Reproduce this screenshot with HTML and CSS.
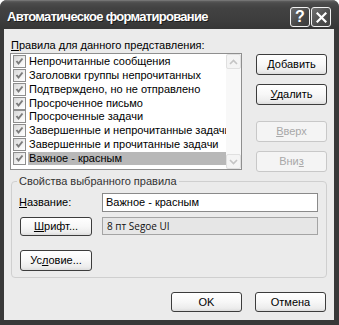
FILE: index.html
```html
<!DOCTYPE html>
<html lang="ru">
<head>
<meta charset="utf-8">
<title>Автоматическое форматирование</title>
<link rel="stylesheet" href="styles.css">
</head>
<body>
<div class="window">
  <div class="titlebar">
    <span class="title">Автоматическое форматирование</span>
    <div class="caption-buttons">
      <span class="cap-btn help">?</span>
      <span class="cap-btn close"><svg width="11" height="11" viewBox="0 0 11 11"><path d="M1.5 1.5 L9.5 9.5 M9.5 1.5 L1.5 9.5" stroke="#fff" stroke-width="2.2" stroke-linecap="square" fill="none"/></svg></span>
    </div>
  </div>
  <div class="client">
    <div class="rules-label"><u>П</u>равила для данного представления:</div>
    <div class="rules-row">
      <div class="listbox">
        <ul class="items">
          <li><span class="cb"><svg width="11" height="11" viewBox="0 0 11 11"><path d="M2.5 5 L4.5 7.5 L8.5 2.5" stroke="#7c7c7c" stroke-width="2" fill="none"/></svg></span><span class="item-text">Непрочитанные сообщения</span></li>
          <li><span class="cb"><svg width="11" height="11" viewBox="0 0 11 11"><path d="M2.5 5 L4.5 7.5 L8.5 2.5" stroke="#7c7c7c" stroke-width="2" fill="none"/></svg></span><span class="item-text">Заголовки группы непрочитанных</span></li>
          <li><span class="cb"><svg width="11" height="11" viewBox="0 0 11 11"><path d="M2.5 5 L4.5 7.5 L8.5 2.5" stroke="#7c7c7c" stroke-width="2" fill="none"/></svg></span><span class="item-text">Подтверждено, но не отправлено</span></li>
          <li><span class="cb"><svg width="11" height="11" viewBox="0 0 11 11"><path d="M2.5 5 L4.5 7.5 L8.5 2.5" stroke="#7c7c7c" stroke-width="2" fill="none"/></svg></span><span class="item-text">Просроченное письмо</span></li>
          <li><span class="cb"><svg width="11" height="11" viewBox="0 0 11 11"><path d="M2.5 5 L4.5 7.5 L8.5 2.5" stroke="#7c7c7c" stroke-width="2" fill="none"/></svg></span><span class="item-text">Просроченные задачи</span></li>
          <li><span class="cb"><svg width="11" height="11" viewBox="0 0 11 11"><path d="M2.5 5 L4.5 7.5 L8.5 2.5" stroke="#7c7c7c" stroke-width="2" fill="none"/></svg></span><span class="item-text">Завершенные и непрочитанные задачи</span></li>
          <li><span class="cb"><svg width="11" height="11" viewBox="0 0 11 11"><path d="M2.5 5 L4.5 7.5 L8.5 2.5" stroke="#7c7c7c" stroke-width="2" fill="none"/></svg></span><span class="item-text">Завершенные и прочитанные задачи</span></li>
          <li class="selected"><span class="cb"><svg width="11" height="11" viewBox="0 0 11 11"><path d="M2.5 5 L4.5 7.5 L8.5 2.5" stroke="#7c7c7c" stroke-width="2" fill="none"/></svg></span><span class="item-text">Важное - красным</span></li>
        </ul>
        <div class="scrollbar">
          <span class="sb-btn"><svg width="9" height="6" viewBox="0 0 9 6"><path d="M1 5 L4.5 1.5 L8 5" stroke="#c4c4c4" stroke-width="1.6" fill="none"/></svg></span>
          <span class="sb-track"></span>
          <span class="sb-btn"><svg width="9" height="6" viewBox="0 0 9 6"><path d="M1 1 L4.5 4.5 L8 1" stroke="#c4c4c4" stroke-width="1.6" fill="none"/></svg></span>
        </div>
      </div>
      <div class="side-buttons">
        <button class="btn btn-add"><u>Д</u>обавить</button>
        <button class="btn btn-del"><u>У</u>далить</button>
        <button class="btn btn-up" disabled><u>В</u>верх</button>
        <button class="btn btn-down" disabled>Вни<u>з</u></button>
      </div>
    </div>
    <fieldset class="props">
      <legend>Свойства выбранного правила</legend>
      <div class="props-grid">
        <label class="name-label"><u>Н</u>азвание:</label>
        <div class="input">Важное - красным</div>
        <button class="btn btn-font"><u>Ш</u>рифт...</button>
        <div class="font-box">8 пт Segoe UI</div>
        <button class="btn btn-cond">Ус<u>л</u>овие...</button>
      </div>
    </fieldset>
    <div class="footer">
      <button class="btn">OK</button>
      <button class="btn">Отмена</button>
    </div>
  </div>
</div>
</body>
</html>
```
FILE: styles.css
```css
html, body {
  margin: 0;
  padding: 0;
  background: #ffffff;
}
body {
  font: 11px/13px "Liberation Sans", Arial, sans-serif;
  color: #000;
}
.window {
  width: 339px;
  height: 325px;
  background: #383838;
  border-radius: 7px 7px 0 0;
  display: flex;
  flex-direction: column;
  overflow: hidden;
}
.titlebar {
  height: 29px;
  flex: none;
  display: flex;
  align-items: center;
  padding: 0 8px 0 7px;
  background: linear-gradient(#8a8a8a 0, #5e5e5e 1px, #4c4c4c 3px, #424242 8px, #3d3d3d 20px, #363636 29px);
}
.title {
  flex: 1;
  font: bold 13px/15px "Liberation Sans", Arial, sans-serif;
  letter-spacing: -0.7px;
  color: #fff;
  text-shadow: 1px 1px 0 #1c1c1c;
  padding-top: 3px;
  white-space: nowrap;
}
.caption-buttons {
  display: flex;
  gap: 1px;
  margin-top: 5px;
}
.cap-btn {
  width: 20px;
  height: 20px;
  box-sizing: border-box;
  border: 1px solid #f2f2f2;
  border-radius: 3px;
  background: linear-gradient(135deg, #6c6c6c, #464646 60%, #3c3c3c);
  color: #fff;
  display: flex;
  align-items: center;
  justify-content: center;
  font: bold 16px/16px "Liberation Sans", Arial, sans-serif;
}
.cap-btn.close {
  background: linear-gradient(135deg, #727272, #4c4c4c 60%, #424242);
}
.client {
  flex: 1;
  margin: 0 5px 5px 4px;
  background: #ebebeb;
  padding: 10px 7px 0 6px;
  display: flex;
  flex-direction: column;
}
.rules-label {
  margin-left: 1px;
  margin-bottom: 1px;
}
.rules-row {
  display: flex;
  gap: 14px;
}
.listbox {
  width: 232px;
  height: 117px;
  box-sizing: border-box;
  border: 1px solid #8f8f8f;
  background: #fff;
  display: flex;
}
.items {
  flex: 1;
  min-width: 0;
  list-style: none;
  margin: 0;
  padding: 1px 0 0;
  overflow: hidden;
}
.items li {
  height: 13.75px;
  display: flex;
  align-items: center;
  padding-left: 2px;
  white-space: nowrap;
}
.cb {
  flex: none;
  width: 13px;
  height: 13px;
  box-sizing: border-box;
  border: 1px solid #8e8e8e;
  background: linear-gradient(135deg, #d8d8d8, #f6f6f6 70%, #ffffff);
  margin-right: 2px;
  display: flex;
  align-items: center;
  justify-content: center;
}
.item-text {
  flex: 1;
  min-width: 0;
  overflow: hidden;
  padding-left: 1px;
  line-height: 13px;
}
.selected .item-text {
  background: #b8b8b8;
}
.scrollbar {
  flex: none;
  width: 15px;
  display: flex;
  flex-direction: column;
  background: #f8f8f8;
}
.sb-btn {
  height: 15px;
  box-sizing: border-box;
  border: 1px solid #e0e0e0;
  border-radius: 2px;
  background: #f4f4f4;
  display: flex;
  align-items: center;
  justify-content: center;
}
.sb-track {
  flex: 1;
}
.side-buttons {
  width: 71px;
  display: flex;
  flex-direction: column;
}
.btn {
  height: 21px;
  box-sizing: border-box;
  border: 1px solid #3c3c3c;
  border-radius: 3px;
  background: linear-gradient(#ffffff, #f7f7f7 50%, #ececec 85%, #dcdcdc);
  font: 11px/13px "Liberation Sans", Arial, sans-serif;
  color: #000;
  padding: 0;
  margin: 0;
}
.btn:disabled {
  border-color: #c8c8c8;
  background: #f4f4f4;
  color: #a8a8a8;
}
.btn-add { margin-top: 1px; }
.btn-del { margin-top: 9px; }
.btn-up { margin-top: 16px; }
.btn-down { margin-top: 9px; }
.props {
  margin: 3px 0 0 1px;
  padding: 5px 8px 6px 8px;
  border: 1px solid #cfcfcf;
  border-radius: 4px;
  min-width: 0;
}
.props legend {
  padding: 0 2px;
  margin-left: -3px;
  color: #333;
}
.props-grid {
  display: grid;
  grid-template-columns: 72px 216px;
  column-gap: 10px;
  row-gap: 5px;
}
.name-label {
  align-self: center;
  margin-left: -1px;
}
.input {
  height: 19px;
  box-sizing: border-box;
  border: 1px solid #8a8a8a;
  background: #fff;
  padding: 2px 3px 0;
}
.btn-font {
  height: 19px;
}
.font-box {
  height: 18px;
  box-sizing: border-box;
  border: 1px solid #a4a4a4;
  background: #e6e6e6;
  padding: 1px 4px 0;
  font: 10px/15px "Open Sans", sans-serif;
  color: #111;
}
.btn-cond {
  margin-top: 9px;
}
.footer {
  display: flex;
  justify-content: flex-end;
  gap: 13px;
  margin-top: 14px;
  padding-right: 1px;
}
.footer .btn {
  width: 71px;
  height: 20px;
}
```
